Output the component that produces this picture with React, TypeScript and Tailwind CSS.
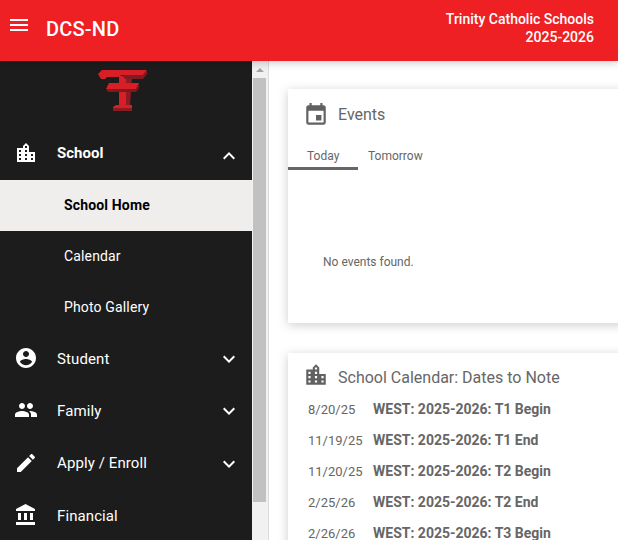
import type { ReactNode } from "react";

const paths = {
  menu: "M3 18h18v-2H3v2zm0-5h18v-2H3v2zm0-7v2h18V6H3z",
  city: "M15 11V5l-3-3-3 3v2H3v14h18V11h-6zm-8 8H5v-2h2v2zm0-4H5v-2h2v2zm0-4H5V9h2v2zm6 8h-2v-2h2v2zm0-4h-2v-2h2v2zm0-4h-2V9h2v2zm0-4h-2V5h2v2zm6 12h-2v-2h2v2zm0-4h-2v-2h2v2z",
  account: "M12 2C6.48 2 2 6.48 2 12s4.48 10 10 10 10-4.48 10-10S17.52 2 12 2zm0 3c1.66 0 3 1.34 3 3s-1.34 3-3 3-3-1.34-3-3 1.34-3 3-3zm0 14.2c-2.5 0-4.71-1.28-6-3.22.03-1.99 4-3.08 6-3.08 1.99 0 5.97 1.09 6 3.08-1.29 1.94-3.5 3.22-6 3.22z",
  people: "M16 11c1.66 0 2.99-1.34 2.99-3S17.66 5 16 5c-1.66 0-3 1.34-3 3s1.34 3 3 3zm-8 0c1.66 0 2.99-1.34 2.99-3S9.66 5 8 5C6.34 5 5 6.34 5 8s1.34 3 3 3zm0 2c-2.33 0-7 1.17-7 3.5V19h14v-2.5c0-2.33-4.67-3.5-7-3.5zm8 0c-.29 0-.62.02-.97.05 1.16.84 1.97 1.97 1.97 3.45V19h6v-2.5c0-2.33-4.67-3.5-7-3.5z",
  pencil: "M3 17.25V21h3.75L17.81 9.94l-3.75-3.75L3 17.25zM20.71 7.04c.39-.39.39-1.02 0-1.41l-2.34-2.34c-.39-.39-1.02-.39-1.41 0l-1.83 1.83 3.75 3.75 1.83-1.83z",
  bank: "M4 10v7h3v-7H4zm6 0v7h3v-7h-3zM2 22h19v-3H2v3zm14-12v7h3v-7h-3zm-4.5-9L2 6v2h19V6l-9.5-5z",
  event: "M17 12h-5v5h5v-5zM16 1v2H8V1H6v2H5c-1.11 0-1.99.9-1.99 2L3 19c0 1.1.89 2 2 2h14c1.1 0 2-.9 2-2V5c0-1.1-.9-2-2-2h-1V1h-2zm3 18H5V8h14v11z",
  down: "M16.59 8.59L12 13.17 7.41 8.59 6 10l6 6 6-6z",
  up: "M12 8l-6 6 1.41 1.41L12 10.83l4.59 4.58L18 14z",
};

function Icon({ d, className }: { d: string; className?: string }) {
  return (
    <svg viewBox="0 0 24 24" fill="currentColor" className={className}>
      <path d={d} />
    </svg>
  );
}

// school crest, coordinates are page pixels
function Logo() {
  return (
    <svg viewBox="98 70 50 42" className="w-[50px] h-[42px]">
      {/* stem */}
      <path d="M119 76 H126 V106 H119 Z" fill="#d81f27" />
      <path d="M126 76 H132 L130 106 H126 Z" fill="#8f1a20" />
      {/* top bar */}
      <path d="M98 74 L102 70 H147 L143 75 H122 L118 77 H107 L105 79 H101 Z" fill="#d81f27" />
      <path d="M122 75 H143 L147 70 V74 L143 79 H125 Z" fill="#7d1c22" />
      {/* cross bar */}
      <path d="M109 83 H139 L136 89 H106 Z" fill="#d81f27" />
      <path d="M106 89 H136 L139 83 V88 L136 92 H108 Z" fill="#80191f" />
      {/* foot */}
      <path d="M113 107 L116 105 H132 V108 H113 Z" fill="#d81f27" />
      <path d="M113 108 H132 V111 H113 Z" fill="#8a1b21" />
    </svg>
  );
}

function NavRow({
  icon,
  label,
  chevron,
  bold,
  chevronClass,
  heightClass,
}: {
  icon: string;
  label: string;
  chevron?: string;
  bold?: boolean;
  chevronClass?: string;
  heightClass?: string;
}) {
  return (
    <div className={`${heightClass ?? "h-[52.3px]"} flex items-center text-white shrink-0`}>
      <Icon d={icon} className="w-6 h-6 ml-[14px] -mt-[2px] shrink-0" />
      <span className={`ml-[19px] flex-1 text-[15px] ${bold ? "font-bold" : "tracking-[0.1px]"}`}>
        {label}
      </span>
      {chevron && <Icon d={chevron} className={`w-6 h-6 mr-[11px] ${chevronClass ?? ""}`} />}
    </div>
  );
}

function SubRow({ label, active }: { label: string; active?: boolean }) {
  return (
    <div
      className={`h-[51px] flex items-center pl-[64px] text-[14px] tracking-[0.15px] shrink-0 ${
        active ? "bg-[#efeeec] text-black font-bold" : "text-white"
      }`}
    >
      {label}
    </div>
  );
}

function Card({ children, className }: { children: ReactNode; className?: string }) {
  return (
    <div className={`bg-white shadow-[0_2px_10px_rgba(0,0,0,0.2)] ${className ?? ""}`}>{children}</div>
  );
}

const dates = [
  ["8/20/25", "WEST: 2025-2026: T1 Begin"],
  ["11/19/25", "WEST: 2025-2026: T1 End"],
  ["11/20/25", "WEST: 2025-2026: T2 Begin"],
  ["2/25/26", "WEST: 2025-2026: T2 End"],
  ["2/26/26", "WEST: 2025-2026: T3 Begin"],
];

export default function App() {
  return (
    <div className="w-[618px] h-[540px] overflow-hidden flex flex-col bg-white font-['Roboto',sans-serif]">
      <header className="h-[61px] shrink-0 bg-[#ee2024] text-white flex items-start relative z-10 shadow-[0_2px_8px_rgba(0,0,0,0.2)]">
        <Icon d={paths.menu} className="w-6 h-6 ml-[7px] mt-[13px]" />
        <span className="ml-[15px] mt-[16px] text-[20px] leading-[26px] font-medium tracking-[0.2px]">
          DCS-ND
        </span>
        <div className="ml-auto mr-6 mt-[10px] text-right text-[14px] leading-[18px] font-medium">
          <div>Trinity Catholic Schools</div>
          <div>2025-2026</div>
        </div>
      </header>

      <div className="flex flex-1 min-h-0">
        <nav className="w-[252px] shrink-0 bg-[#1c1c1c] flex flex-col overflow-hidden">
          <div className="h-[66px] shrink-0 flex justify-center pt-[9px] pr-[6px]">
            <Logo />
          </div>
          <NavRow
            icon={paths.city}
            label="School"
            chevron={paths.up}
            bold
            chevronClass="mt-[4px]"
            heightClass="h-[53px]"
          />
          <SubRow label="School Home" active />
          <SubRow label="Calendar" />
          <SubRow label="Photo Gallery" />
          <NavRow icon={paths.account} label="Student" chevron={paths.down} />
          <NavRow icon={paths.people} label="Family" chevron={paths.down} />
          <NavRow icon={paths.pencil} label="Apply / Enroll" chevron={paths.down} />
          <NavRow icon={paths.bank} label="Financial" />
        </nav>

        <div className="w-[17px] shrink-0 bg-[#f1f1f1] border-r border-[#dcdcdc] flex flex-col items-start">
          <div className="w-[15px] h-[17px] flex items-center justify-center">
            <div className="w-0 h-0 border-x-[4px] border-x-transparent border-b-[4px] border-b-[#a3a3a3]" />
          </div>
          <div className="ml-[1px] w-[13px] h-[424px] bg-[#c1c1c1]" />
        </div>

        <main className="flex-1 min-w-0 pl-[19px] pt-[28px] flex flex-col gap-[30px] overflow-hidden">
          <Card className="h-[234px] w-[400px] shrink-0 flex flex-col text-[#666]">
            <div className="flex items-center h-[52px] pl-[15px]">
              <Icon d={paths.event} className="w-[26px] h-[26px] text-[#616161]" />
              <span className="ml-[9px] text-[16px]">Events</span>
            </div>
            <div className="flex text-[12px] h-[29px]">
              <div className="w-[70px] border-b-[3px] border-[#666] pl-[19px] pt-[6px]">Today</div>
              <div className="pl-[10px] pt-[6px]">Tomorrow</div>
            </div>
            <div className="pl-[35px] pt-[83px] text-[12px]">No events found.</div>
          </Card>

          <Card className="w-[400px] h-[300px] shrink-0 text-[#666]">
            <div className="flex items-center h-[41px] pl-[15px] pt-[9px]">
              <Icon d={paths.city} className="w-[26px] h-[26px] -mt-[6px] text-[#616161]" />
              <span className="ml-[9px] text-[16px]">School Calendar: Dates to Note</span>
            </div>
            <div className="pl-[20px]">
              {dates.map(([date, title]) => (
                <div key={date} className="flex items-center h-[31px] text-[13px]">
                  <span className="w-[65px] shrink-0">{date}</span>
                  <span className="text-[14px] font-bold">{title}</span>
                </div>
              ))}
            </div>
          </Card>
        </main>
      </div>
    </div>
  );
}
